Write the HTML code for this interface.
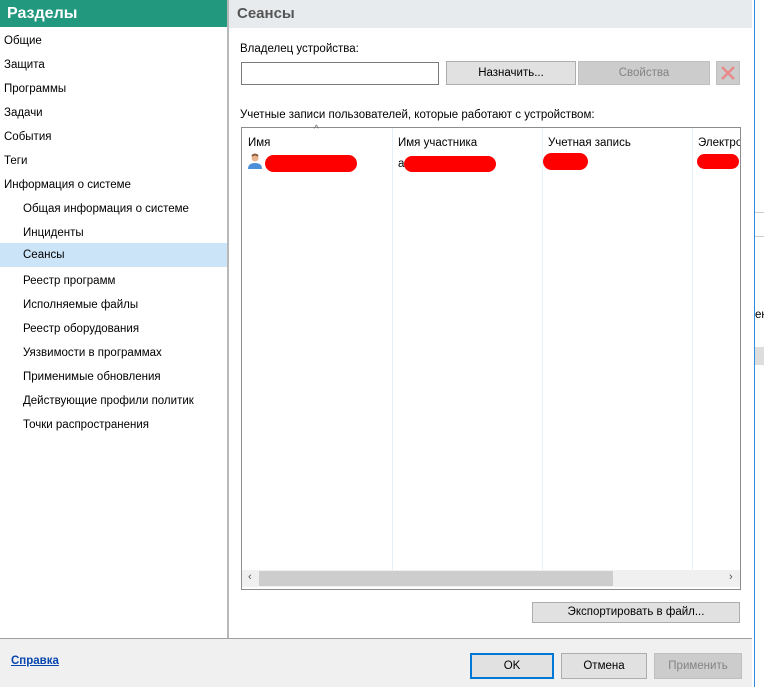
<!DOCTYPE html>
<html><head><meta charset="utf-8"><style>
*{box-sizing:border-box;margin:0;padding:0}
body{width:764px;height:687px;position:relative;overflow:hidden;background:#fff;font-family:"Liberation Sans",Arial,sans-serif;font-size:11.5px;color:#000}
.a{position:absolute}
.nav div{position:absolute;left:0;width:227px;height:24px;line-height:28px;white-space:nowrap}
.btn{position:absolute;background:#e1e1e1;border:1px solid #adadad;text-align:center;font-size:11.5px}
.red{position:absolute;background:#f00;border-radius:10px}
</style></head><body>
<div class="a" style="left:0;top:0;width:227px;height:27px;background:#22997f;color:#fff;font-weight:bold;font-size:16px;line-height:27px;padding-left:7px">Разделы</div>
<div class="a" style="left:227px;top:0;width:2px;height:638px;background:#b8b8b8"></div>
<div class="nav">
<div style="top:27px;padding-left:4px">Общие</div>
<div style="top:51px;padding-left:4px">Защита</div>
<div style="top:75px;padding-left:4px">Программы</div>
<div style="top:99px;padding-left:4px">Задачи</div>
<div style="top:123px;padding-left:4px">События</div>
<div style="top:147px;padding-left:4px">Теги</div>
<div style="top:171px;padding-left:4px">Информация о системе</div>
<div style="top:195px;padding-left:23px">Общая информация о системе</div>
<div style="top:219px;padding-left:23px">Инциденты</div>
<div style="top:243px;padding-left:23px;background:#cce4f7;line-height:24px">Сеансы</div>
<div style="top:267px;padding-left:23px">Реестр программ</div>
<div style="top:291px;padding-left:23px">Исполняемые файлы</div>
<div style="top:315px;padding-left:23px">Реестр оборудования</div>
<div style="top:339px;padding-left:23px">Уязвимости в программах</div>
<div style="top:363px;padding-left:23px">Применимые обновления</div>
<div style="top:387px;padding-left:23px">Действующие профили политик</div>
<div style="top:411px;padding-left:23px">Точки распространения</div>
</div>
<div class="a" style="left:229px;top:0;width:523px;height:28px;background:#e8ebed;color:#555;font-weight:bold;font-size:15px;line-height:28px;padding-left:8px">Сеансы</div>
<div class="a" style="left:240px;top:43px">Владелец устройства:</div>
<div class="a" style="left:241px;top:62px;width:198px;height:23px;border:1px solid #7a7a7a;background:#fff"></div>
<div class="btn" style="left:446px;top:61px;width:130px;height:24px;line-height:22px">Назначить...</div>
<div class="btn" style="left:578px;top:61px;width:132px;height:24px;line-height:22px;background:#cccccc;border-color:#bfbfbf;color:#838383">Свойства</div>
<div class="btn" style="left:716px;top:61px;width:24px;height:24px;background:#cccccc;border-color:#bfbfbf"><svg width="22" height="22" viewBox="0 0 22 22"><path d="M5 5L17 17M17 5L5 17" stroke="#e98a8a" stroke-width="2.5"/></svg></div>
<div class="a" style="left:240px;top:109px">Учетные записи пользователей, которые работают с устройством:</div>
<div class="a" style="left:241px;top:127px;width:500px;height:463px;border:1px solid #8c8c8c;background:#fff"></div>
<div class="a" style="left:392px;top:128px;width:1px;height:442px;background:#e6f0fb"></div>
<div class="a" style="left:542px;top:128px;width:1px;height:442px;background:#e6f0fb"></div>
<div class="a" style="left:692px;top:128px;width:1px;height:442px;background:#e6f0fb"></div>
<div class="a" style="left:314px;top:124px;font-size:10px;color:#666">^</div>
<div class="a" style="left:248px;top:137px">Имя</div>
<div class="a" style="left:398px;top:137px">Имя участника</div>
<div class="a" style="left:548px;top:137px">Учетная запись</div>
<div class="a" style="left:698px;top:137px;width:42px;overflow:hidden">Электро</div>
<svg class="a" style="left:246px;top:153px" width="18" height="16" viewBox="0 0 18 16"><circle cx="9" cy="5" r="3.5" fill="#e8b48f"/><path d="M6 3Q9 0 12 3" stroke="#8a5a3a" stroke-width="2" fill="none"/><path d="M2 16Q2 10 9 10Q16 10 16 16Z" fill="#4b8fd8"/></svg>
<div class="red" style="left:265px;top:155px;width:92px;height:17px"></div>
<div class="a" style="left:398px;top:158px">a</div>
<div class="red" style="left:404px;top:156px;width:92px;height:16px"></div>
<div class="red" style="left:543px;top:153px;width:45px;height:17px"></div>
<div class="red" style="left:697px;top:154px;width:42px;height:15px"></div>
<div class="a" style="left:242px;top:570px;width:498px;height:17px;background:#f0f0f0"></div>
<div class="a" style="left:259px;top:571px;width:354px;height:15px;background:#cdcdcd"></div>
<div class="a" style="left:248px;top:571px;font-size:11px;color:#555">&lsaquo;</div>
<div class="a" style="left:729px;top:571px;font-size:11px;color:#555">&rsaquo;</div>
<div class="btn" style="left:532px;top:602px;width:208px;height:21px;line-height:19px">Экспортировать в файл...</div>
<div class="a" style="left:0;top:638px;width:752px;height:49px;background:#f0f0f0;border-top:1px solid #a0a0a0"></div>
<div class="a" style="left:11px;top:655px;color:#0645ad;font-weight:bold;text-decoration:underline">Справка</div>
<div class="btn" style="left:470px;top:653px;width:84px;height:26px;line-height:22px;border:2px solid #0078d7">OK</div>
<div class="btn" style="left:561px;top:653px;width:86px;height:26px;line-height:24px">Отмена</div>
<div class="btn" style="left:654px;top:653px;width:88px;height:26px;line-height:24px;background:#cccccc;border-color:#bfbfbf;color:#838383">Применить</div>
<div class="a" style="left:752px;top:0;width:2px;height:687px;background:#fff"></div>
<div class="a" style="left:754px;top:0;width:1px;height:687px;background:#2b8be0"></div>
<div class="a" style="left:755px;top:0;width:9px;height:687px;background:#fff"></div>
<div class="a" style="left:755px;top:212px;width:9px;height:1px;background:#ccc"></div>
<div class="a" style="left:755px;top:236px;width:9px;height:1px;background:#ccc"></div>
<div class="a" style="left:755px;top:309px">ен</div>
<div class="a" style="left:755px;top:347px;width:9px;height:18px;background:#ddd"></div>
</body></html>
